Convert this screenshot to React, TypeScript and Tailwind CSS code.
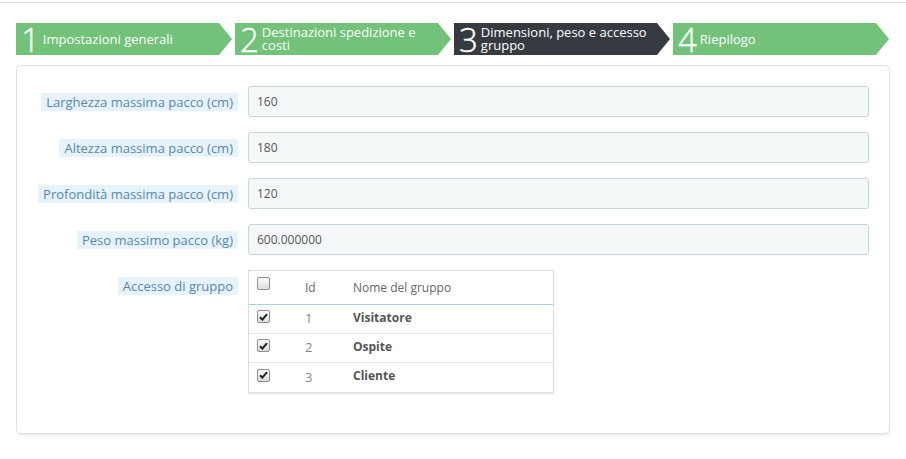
import React from "react";

const font = { fontFamily: '"Open Sans", "Noto Sans", Arial, sans-serif' };

function Step({ n, text, active }: { n: string; text: React.ReactNode; active?: boolean }) {
  return (
    <div
      className={`flex h-[32px] w-[216px] shrink-0 items-center pl-[5px] text-white [clip-path:polygon(0_0,calc(100%-13px)_0,100%_50%,calc(100%-13px)_100%,0_100%)] ${
        active ? "bg-[#363a41]" : "bg-[#72c279]"
      }`}
    >
      <span className="text-[33px] font-light leading-none tracking-[-1px] [-webkit-text-stroke:0.4px_white]">{n}</span>
      <span className="ml-[4px] pr-[14px] text-[13px] leading-[13px]">{text}</span>
    </div>
  );
}

function Check({ checked }: { checked?: boolean }) {
  return (
    <span className="inline-flex h-[13px] w-[13px] items-center justify-center rounded-[2px] border border-[#8f8f8f] bg-gradient-to-b from-[#fcfcfc] to-[#dcdcdc]">
      {checked && (
        <svg width="9" height="8" viewBox="0 0 9 8">
          <path d="M1 4.2 L3.4 6.6 L8 1.2" stroke="#222" strokeWidth="2" fill="none" />
        </svg>
      )}
    </span>
  );
}

function Row({ label, value }: { label: string; value: string }) {
  return (
    <div className="flex items-center">
      <div className="flex w-[220px] justify-end">
        <span className="bg-[#e6f3fa] px-[5px] py-[1px] text-[13px] leading-[16px] text-[#5888ae]">{label}</span>
      </div>
      <div className="ml-[10px] flex h-[31px] flex-1 items-center rounded-[3px] border border-[#c7d6db] bg-[#f5f8f9] px-[8px] text-[12px] text-[#555]">
        {value}
      </div>
    </div>
  );
}

export default function App() {
  const groups = [
    { id: "1", name: "Visitatore" },
    { id: "2", name: "Ospite" },
    { id: "3", name: "Cliente" },
  ];
  return (
    <div className="min-h-[459px] w-[906px] bg-white" style={font}>
      <div className="h-[3px] border-b border-[#e2e2e2]" />
      <div className="ml-[16px] mt-[20px] flex gap-[3px]">
        <Step n="1" text="Impostazioni generali" />
        <Step n="2" text={<>Destinazioni spedizione e<br />costi</>} />
        <Step n="3" text={<>Dimensioni, peso e accesso<br />gruppo</>} active />
        <Step n="4" text="Riepilogo" />
      </div>
      <div className="mx-[16px] mt-[10px] h-[369px] rounded-[5px] border border-[#e0e0e0] pl-[1px] pr-[20px] pt-[20px] shadow-[0_2px_0_rgba(0,0,0,0.05)]">
        <div className="flex flex-col gap-[15px]">
          <Row label="Larghezza massima pacco (cm)" value="160" />
          <Row label="Altezza massima pacco (cm)" value="180" />
          <Row label="Profondità massima pacco (cm)" value="120" />
          <Row label="Peso massimo pacco (kg)" value="600.000000" />
          <div className="flex items-start">
            <div className="flex w-[220px] justify-end pt-[7px]">
              <span className="bg-[#e6f3fa] px-[5px] py-[1px] text-[13px] leading-[16px] text-[#5888ae]">Accesso di gruppo</span>
            </div>
            <div className="ml-[10px] w-[306px] border border-[#dcdcdc] shadow-[0_2px_0_rgba(0,0,0,0.05)]">
              <div className="flex h-[34px] items-center border-b border-[#a8d0e6] text-[12px] text-[#666]">
                <div className="w-[56px] pb-[4px] pl-[8px]"><Check /></div>
                <div className="w-[48px]">Id</div>
                <div>Nome del gruppo</div>
              </div>
              {groups.map((g, i) => (
                <div
                  key={g.id}
                  className={`flex h-[29px] items-center pb-[3px] text-[12px] text-[#555] ${i < 2 ? "border-b border-[#e5e5e5]" : ""}`}
                >
                  <div className="w-[56px] pb-[2px] pl-[8px]"><Check checked /></div>
                  <div className="w-[48px] pt-[3px] text-[13px] font-normal text-[#888]">{g.id}</div>
                  <div className="font-bold">{g.name}</div>
                </div>
              ))}
            </div>
          </div>
        </div>
      </div>
    </div>
  );
}
